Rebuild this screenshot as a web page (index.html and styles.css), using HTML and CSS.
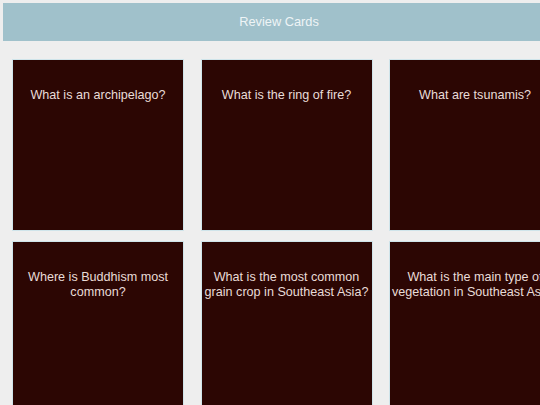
FILE: index.html
```html
<!DOCTYPE html>
<html lang="en">
<head>
  <meta charset="UTF-8" />
  <meta name="viewport" content="width=device-width, initial-scale=1.0"/>
  <title>Review Cards</title>
  <link rel="stylesheet" href="styles.css">
</head>
<body>

  <header class="titulo">Review Cards</header>

  <div class="tarjetas">
    <div class="tarjeta">What is an archipelago?</div>
    <div class="tarjeta">What is the ring of fire?</div>
    <div class="tarjeta">What are tsunamis?</div>
    <div class="tarjeta">Where is Buddhism most common?</div>
    <div class="tarjeta">What is the most common grain crop in Southeast Asia?</div>
    <div class="tarjeta">What is the main type of vegetation in Southeast Asia?</div>
  </div>

</body>
</html>
```

FILE: styles.css
```css
body {
  font-family: "Liberation Sans", Arial, sans-serif;
  background-color: #eeeeee;
  margin: 0;
  padding: 3px;
  width: 552px;
}

.titulo {
  background-color: #a0c1cb;
  color: #eef4f6;
  text-align: center;
  font-size: 12.8px;
  height: 38px;
  line-height: 38px;
}

.tarjetas {
  display: flex;
  flex-wrap: wrap;
  column-gap: 16.5px;
  row-gap: 10px;
  padding: 18px 0 0 9px;
  width: 570px;
}

.tarjeta {
  width: 172px;
  height: 172px;
  box-sizing: border-box;
  background-color: #2c0603;
  border: 1px solid #cfe4ea;
  color: #e9dcd8;
  font-size: 12.6px;
  line-height: 15px;
  text-align: center;
  padding: 28px 0 0;
}
```
